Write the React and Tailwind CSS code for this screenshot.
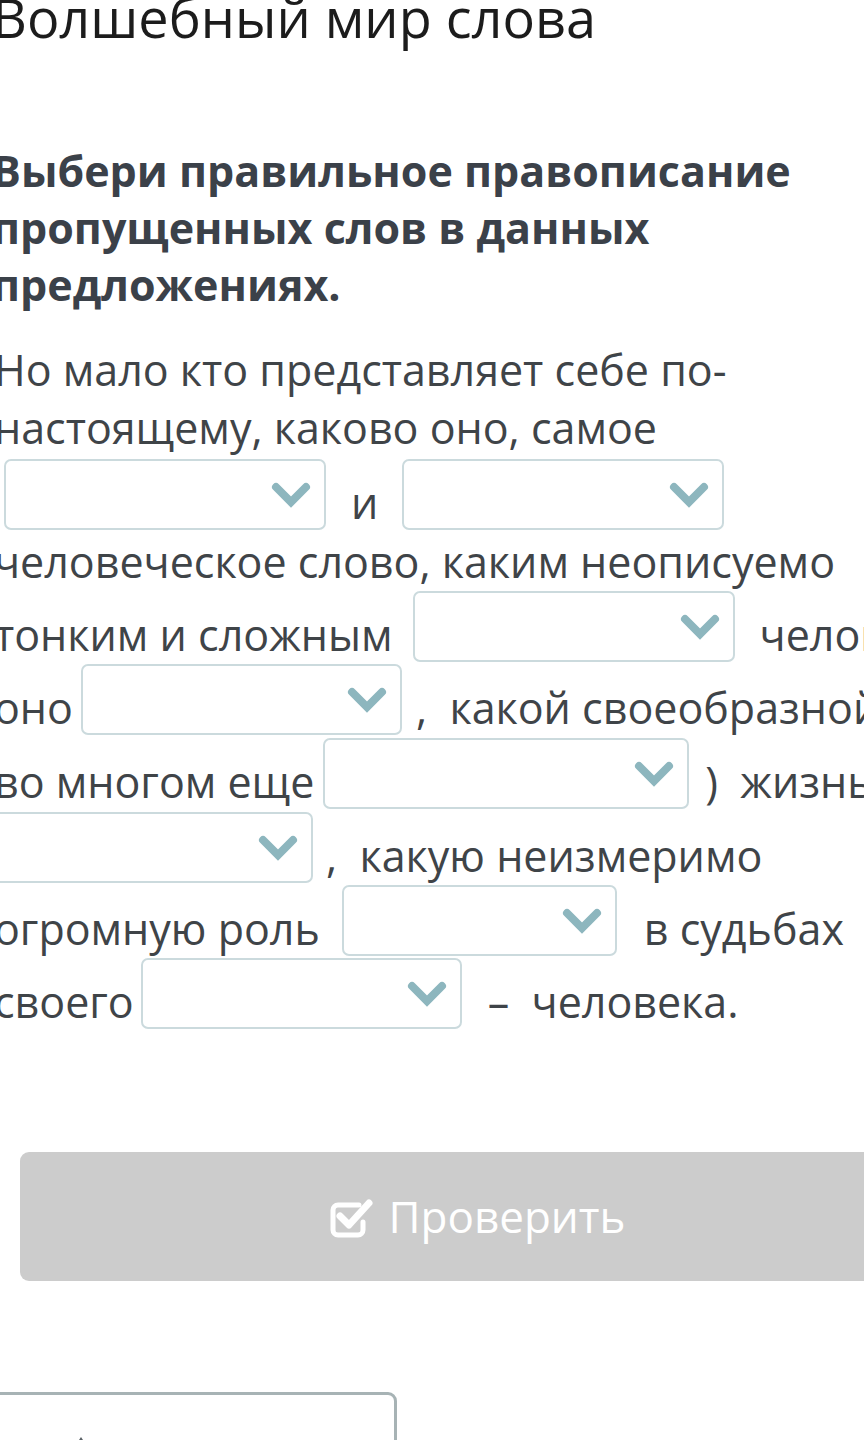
import React from "react";

function Chevron() {
  return (
    <svg width="40" height="26" viewBox="0 0 40 26" className="shrink-0">
      <polyline
        points="5,5 20,20 35,5"
        fill="none"
        stroke="#8db6be"
        strokeWidth="8"
        strokeLinecap="round"
        strokeLinejoin="miter"
      />
    </svg>
  );
}

function Select({ w = "w-[322px]", className = "" }) {
  return (
    <div
      className={`shrink-0 ${w} h-[71px] border-2 border-[#cbdadd] rounded-[7px] bg-white flex items-center justify-end pr-[13px] ${className}`}
    >
      <Chevron />
    </div>
  );
}

function T({ children, className = "" }) {
  return (
    <span className={`shrink-0 whitespace-pre pt-[15px] leading-[58px] ${className}`}>
      {children}
    </span>
  );
}

function Row({ children, h = "h-[73px]" }) {
  return <div className={`flex items-start ${h}`}>{children}</div>;
}

function CheckIcon() {
  return (
    <svg width="46" height="42" viewBox="0 0 46 42" className="shrink-0">
      <path
        d="M30 9 H9 a5 5 0 0 0 -5 5 V34 a5 5 0 0 0 5 5 H29 a5 5 0 0 0 5 -5 V26"
        fill="none"
        stroke="#ffffff"
        strokeWidth="5"
        strokeLinecap="round"
      />
      <path
        d="M11 20 L20 29 L40 7"
        fill="none"
        stroke="#ffffff"
        strokeWidth="7"
        strokeLinecap="round"
        strokeLinejoin="round"
      />
    </svg>
  );
}

export default function App() {
  return (
    <div className="w-[864px] h-[1440px] overflow-hidden bg-white font-['Open_Sans',sans-serif]">
      <div className="-ml-[8px] w-[960px]">
        <h1 className="-mt-[10px] text-[54px] leading-[54px] text-[#1c1c1c] font-normal whitespace-nowrap">
          Волшебный мир слова
        </h1>

        <div className="mt-[98px] text-[43px] leading-[57px] font-bold text-[#3b4149] whitespace-nowrap">
          <div>Выбери правильное правописание</div>
          <div>пропущенных слов в данных</div>
          <div>предложениях.</div>
        </div>

        <div className="mt-[28px] text-[43px] text-[#3f4448]">
          <div className="leading-[58px] ml-[2px] whitespace-nowrap">Но мало кто представляет себе по-</div>
          <div className="leading-[58px] ml-[2px] whitespace-nowrap">настоящему, каково оно, самое</div>

          <Row h="h-[75px]">
            <Select className="ml-[12px] mt-[2px]" />
            <T className="ml-[25px] pt-[17px]">и</T>
            <Select className="ml-[24px] mt-[2px]" />
          </Row>

          <div className="leading-[59px] ml-[2px] whitespace-nowrap">человеческое слово, каким неописуемо</div>

          <Row>
            <T className="ml-[2px]">тонким и сложным</T>
            <Select className="ml-[20px]" />
            <T className="ml-[25px]">человеческим</T>
          </Row>

          <Row h="h-[74px]">
            <T className="ml-[2px]">оно</T>
            <Select w="w-[321px]" className="ml-[8px]" />
            <T className="ml-[14px]">,  какой своеобразной</T>
          </Row>

          <Row h="h-[74px]">
            <T className="ml-[2px]">во многом еще</T>
            <Select w="w-[366px]" className="ml-[9px]" />
            <T className="ml-[16px]">)  жизнью</T>
          </Row>

          <Row>
            <Select className="-ml-[1px]" />
            <T className="ml-[13px]">,  какую неизмеримо</T>
          </Row>

          <Row>
            <T className="ml-[2px]">огромную роль</T>
            <Select w="w-[275px]" className="ml-[22px]" />
            <T className="ml-[27px]">в судьбах</T>
          </Row>

          <Row>
            <T className="ml-[2px]">своего</T>
            <Select w="w-[321px]" className="ml-[7px]" />
            <T className="ml-[26px]">–  человека.</T>
          </Row>
        </div>

        <button className="mt-[121px] ml-[28px] w-[914px] h-[129px] rounded-[9px] bg-[#cccccc] flex items-center justify-center gap-[14px] text-white text-[44px]">
          <CheckIcon />
          <span className="leading-none -mt-[2px]">Проверить</span>
        </button>

        <div className="mt-[111px] -ml-[12px] w-[417px] h-[120px] border-[3px] border-[#a7b3b5] rounded-[9px] bg-white pt-[40px] pl-[88px]">
          <svg width="20" height="40" viewBox="0 0 20 40">
            <path d="M10 2 L18 14 H2 Z" fill="#5a6166" />
          </svg>
        </div>
      </div>
    </div>
  );
}
